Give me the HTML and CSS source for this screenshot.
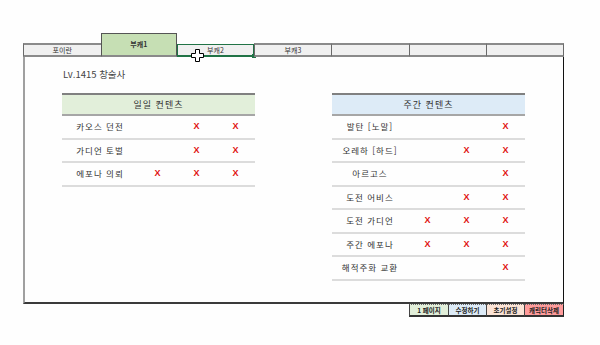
FILE: index.html
```html
<!DOCTYPE html>
<html lang="ko">
<head>
    <meta charset="UTF-8">
    <title>숙제 체크</title>
    <link rel="stylesheet" href="styles.css">
</head>
<body>
    <div class="sheet">
        <!-- Tabs -->
        <div class="tabs">
            <div class="tab">포이란</div>
            <div class="tab active">부캐1</div>
            <div class="tab selected">부캐2<span class="handle"></span>
                <svg class="cursor" width="13" height="13" viewBox="0 0 13 13">
                    <path d="M4.5 0.5h4v4h4v4h-4v4h-4v-4h-4v-4h4z" fill="#fff" stroke="#000" stroke-width="1"/>
                </svg>
            </div>
            <div class="tab">부캐3</div>
            <div class="tab"></div>
            <div class="tab"></div>
            <div class="tab"></div>
        </div>

        <!-- Board -->
        <div class="board">
            <div class="char-name">Lv.1415 창술사</div>
            <div class="tables">
                <div class="table daily">
                    <div class="table-head">일일 컨텐츠</div>
                    <div class="row"><span class="label">카오스 던전</span><span></span><span class="x">X</span><span class="x">X</span></div>
                    <div class="row"><span class="label">가디언 토벌</span><span></span><span class="x">X</span><span class="x">X</span></div>
                    <div class="row"><span class="label">에포나 의뢰</span><span class="x">X</span><span class="x">X</span><span class="x">X</span></div>
                </div>
                <div class="table weekly">
                    <div class="table-head">주간 컨텐츠</div>
                    <div class="row"><span class="label">발탄 [노말]</span><span></span><span></span><span class="x">X</span></div>
                    <div class="row"><span class="label">오레하 [하드]</span><span></span><span class="x">X</span><span class="x">X</span></div>
                    <div class="row"><span class="label">아르고스</span><span></span><span></span><span class="x">X</span></div>
                    <div class="row"><span class="label">도전 어비스</span><span></span><span class="x">X</span><span class="x">X</span></div>
                    <div class="row"><span class="label">도전 가디언</span><span class="x">X</span><span class="x">X</span><span class="x">X</span></div>
                    <div class="row"><span class="label">주간 에포나</span><span class="x">X</span><span class="x">X</span><span class="x">X</span></div>
                    <div class="row"><span class="label">해적주화 교환</span><span></span><span></span><span class="x">X</span></div>
                </div>
            </div>
        </div>

        <!-- Buttons -->
        <div class="buttons">
            <div class="btn page">1 페이지</div>
            <div class="btn edit">수정하기</div>
            <div class="btn reset">초기설정</div>
            <div class="btn remove">캐릭터삭제</div>
        </div>
    </div>
</body>
</html>
```

FILE: styles.css
```css
/* Global Styles */
body {
    margin: 0;
    background-color: #fefefe;
    font-family: "Noto Sans CJK KR", "Noto Sans", sans-serif;
    color: #333;
}

.sheet {
    width: 541px;
    margin: 33px 0 0 23px;
}

/* Tabs */
.tabs {
    display: flex;
    align-items: flex-end;
    height: 24px;
}

.tab {
    position: relative;
    width: 77px;
    height: 10px;
    background-color: #f0f0f0;
    border-top: 2px solid #8a8a8a;
    border-bottom: 2px solid #8a8a8a;
    border-left: 1px solid #6a6a6a;
    font-size: 7px;
    line-height: 10px;
    text-align: center;
    color: #333;
}

.tab:last-child {
    border-right: 1px solid #6a6a6a;
    width: 76px;
}

.tab.active {
    width: 75px;
    height: 21px;
    background-color: #c6dfb4;
    border-top: 1px solid #555;
    border-left: 1px solid #555;
    border-right: 1px solid #555;
    border-bottom: 2px solid #8a8a8a;
    font-weight: bold;
    line-height: 21px;
}

.tab.selected {
    width: 75px;
    height: 10px;
    border: 1px solid #217346;
    border-bottom: 2px solid #217346;
}

.handle {
    position: absolute;
    right: -3px;
    bottom: -3px;
    width: 4px;
    height: 4px;
    background-color: #217346;
}

.cursor {
    position: absolute;
    left: 13px;
    top: 4px;
}

/* Board */
.board {
    box-sizing: border-box;
    height: 247px;
    padding-top: 10px;
    border-left: 2px solid #a0a0a0;
    border-right: 1px solid #111;
    border-bottom: 2px solid #3a3a3a;
}

.char-name {
    margin-left: 38px;
    font-size: 9.5px;
    color: #444;
    height: 15px;
    line-height: 15px;
}

.tables {
    display: flex;
    align-items: flex-start;
    gap: 77px;
    margin: 11px 0 0 37px;
}

.table {
    width: 193px;
}

.table-head {
    height: 19px;
    line-height: 19px;
    border-top: 2px solid #808080;
    border-bottom: 2px solid #a6a6a6;
    text-align: center;
    font-size: 9px;
    letter-spacing: 1px;
    color: #333;
}

.daily .table-head {
    background-color: #e2efda;
}

.weekly .table-head {
    background-color: #ddebf7;
}

.row {
    display: grid;
    grid-template-columns: 76px 39px 39px 39px;
    height: 21.5px;
    line-height: 21.5px;
    border-bottom: 2px solid #dcdcdc;
    font-size: 8.5px;
    color: #333;
}

.row span {
    text-align: center;
}

.label {
    letter-spacing: 1px;
}

.x {
    color: #e01010;
    font-family: "Liberation Sans", Arial, sans-serif;
    font-weight: bold;
    font-size: 9px;
}

/* Buttons */
.buttons {
    display: flex;
    justify-content: flex-end;
}

.btn {
    height: 10px;
    line-height: 10px;
    font-size: 6.5px;
    font-weight: bold;
    text-align: center;
    color: #222;
    border-top: 1px dotted #666;
    border-bottom: 2px solid #333;
    border-left: 1px solid #444;
}

.btn:last-child {
    border-right: 1px solid #222;
}

.page {
    width: 38px;
    background-color: #e2efda;
}

.edit {
    width: 37px;
    background-color: #ddebf7;
}

.reset {
    width: 37px;
    background-color: #fce4d6;
}

.remove {
    width: 38px;
    background-color: #ff9b9b;
}
```
